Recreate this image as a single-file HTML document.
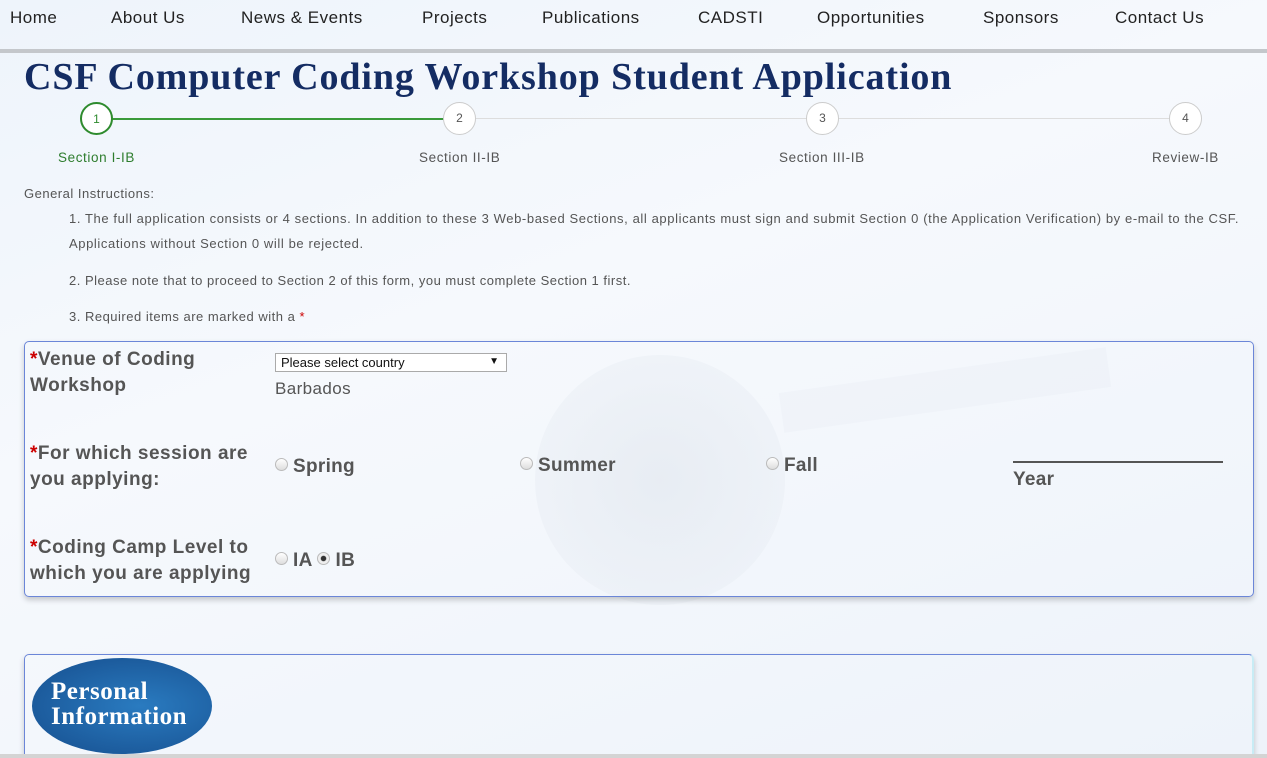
<!DOCTYPE html>
<html style="width:1267px;height:758px;overflow:hidden"><head><meta charset="utf-8"><style>
*{margin:0;padding:0;box-sizing:border-box}
body{width:1267px;height:758px;overflow:hidden;position:relative;font-family:"Liberation Sans",sans-serif;background:linear-gradient(160deg,#eef4fb 0%,#f6f9fd 40%,#eef3fa 100%);color:#444}
.abs{position:absolute}
.nav span{position:absolute;top:8px;font-size:17px;color:#222;letter-spacing:.5px}
.circ{position:absolute;width:33px;height:33px;border-radius:50%;border:1.5px solid #ccc;background:#fff;text-align:center;line-height:30px;font-size:12px;color:#555;top:102px}
.lbl{position:absolute;top:150px;font-size:13.5px;color:#555;letter-spacing:.6px}
.ins{position:absolute;font-size:13px;color:#555;letter-spacing:.5px}
.box{position:absolute;left:24px;width:1230px;border:1.5px solid #6b86d8;border-radius:5px;box-shadow:0 3px 6px rgba(0,0,0,.2)}
.q{position:absolute;font-size:19px;font-weight:bold;color:#555;line-height:26px;letter-spacing:.5px}
.q i{color:#c00;font-style:normal}
.r{position:absolute;font-size:19px;font-weight:bold;color:#555;letter-spacing:.3px}
.rad{display:inline-block;width:13px;height:13px;border-radius:50%;border:1px solid #bbb;background:linear-gradient(#fff,#ddd);vertical-align:1px;margin-right:5px}
</style></head><body>
<div class="abs" style="left:535px;top:355px;width:250px;height:250px;border-radius:50%;background:radial-gradient(circle at 50% 50%,rgba(220,226,234,.5),rgba(230,235,242,.2));"></div>
<div class="abs" style="left:780px;top:370px;width:330px;height:40px;background:rgba(225,230,238,.2);transform:rotate(-8deg)"></div>
<div class="nav">
<span style="left:10px">Home</span><span style="left:111px">About Us</span><span style="left:241px">News &amp; Events</span><span style="left:422px">Projects</span><span style="left:542px">Publications</span><span style="left:698px">CADSTI</span><span style="left:817px">Opportunities</span><span style="left:983px">Sponsors</span><span style="left:1115px">Contact Us</span>
</div>
<div class="abs" style="left:0;top:49px;width:1267px;height:4px;background:#c4c7cb"></div>
<div class="abs" style="left:24px;top:55px;font-family:'Liberation Serif',serif;font-weight:bold;font-size:38px;color:#142c63;letter-spacing:.9px">CSF Computer Coding Workshop Student Application</div>
<div class="abs" style="left:112px;top:118px;width:332px;height:2px;background:#3a9a3a"></div>
<div class="abs" style="left:476px;top:118px;width:700px;height:1px;background:#ddd"></div>
<div class="circ" style="left:80px;border:2px solid #2e8b2e;color:#2e8b2e">1</div>
<div class="circ" style="left:443px">2</div>
<div class="circ" style="left:806px">3</div>
<div class="circ" style="left:1169px">4</div>
<div class="lbl" style="left:58px;color:#2e7d2e">Section I-IB</div>
<div class="lbl" style="left:419px">Section II-IB</div>
<div class="lbl" style="left:779px">Section III-IB</div>
<div class="lbl" style="left:1152px">Review-IB</div>
<div class="ins" style="left:24px;top:186px">General Instructions:</div>
<div class="ins" style="left:69px;top:206px;width:1185px;line-height:25px;letter-spacing:.6px">1. The full application consists or 4 sections. In addition to these 3 Web-based Sections, all applicants must sign and submit Section 0 (the Application Verification) by e-mail to the CSF. Applications without Section 0 will be rejected.</div>
<div class="ins" style="left:69px;top:273px">2. Please note that to proceed to Section 2 of this form, you must complete Section 1 first.</div>
<div class="ins" style="left:69px;top:309px">3. Required items are marked with a <span style="color:#c00">*</span></div>
<div class="box" style="top:341px;height:256px"></div>
<div class="q" style="left:30px;top:347px"><i>*</i>Venue of Coding<br>Workshop</div>
<div class="abs" style="left:275px;top:353px;width:232px;height:19px;border:1px solid #aaa;background:#fff;font-size:13px;color:#111;padding:1px 5px">Please select country<span style="position:absolute;right:7px;font-size:10px;top:2px">▼</span></div>
<div class="abs" style="left:275px;top:379px;font-size:17px;color:#555;letter-spacing:.4px">Barbados</div>
<div class="q" style="left:30px;top:441px"><i>*</i>For which session are<br>you applying:</div>
<div class="r" style="left:275px;top:456px"><span class="rad"></span>Spring</div>
<div class="r" style="left:520px;top:455px"><span class="rad"></span>Summer</div>
<div class="r" style="left:766px;top:455px"><span class="rad"></span>Fall</div>
<div class="abs" style="left:1013px;top:461px;width:210px;height:2px;background:#555"></div>
<div class="r" style="left:1013px;top:469px">Year</div>
<div class="q" style="left:30px;top:535px"><i>*</i>Coding Camp Level to<br>which you are applying</div>
<div class="r" style="left:275px;top:550px"><span class="rad"></span>IA <span class="rad" style="background:radial-gradient(#333 30%,#eee 40%)"></span>IB</div>
<div class="box" style="top:654px;height:110px;border-right:2px solid #c8ecf5"></div>
<div class="abs" style="left:32px;top:658px;width:180px;height:96px;border-radius:50% / 50%;background:radial-gradient(ellipse at 60% 50%,#2a7bc0,#164e8e)"></div>
<div class="abs" style="left:51px;top:679px;font-family:'Liberation Serif',serif;font-weight:bold;font-size:25px;color:#fff;line-height:25px;letter-spacing:.5px">Personal<br>Information</div>
<div class="abs" style="left:0;top:754px;width:1267px;height:4px;background:#d4d4d4"></div>
</body></html>
